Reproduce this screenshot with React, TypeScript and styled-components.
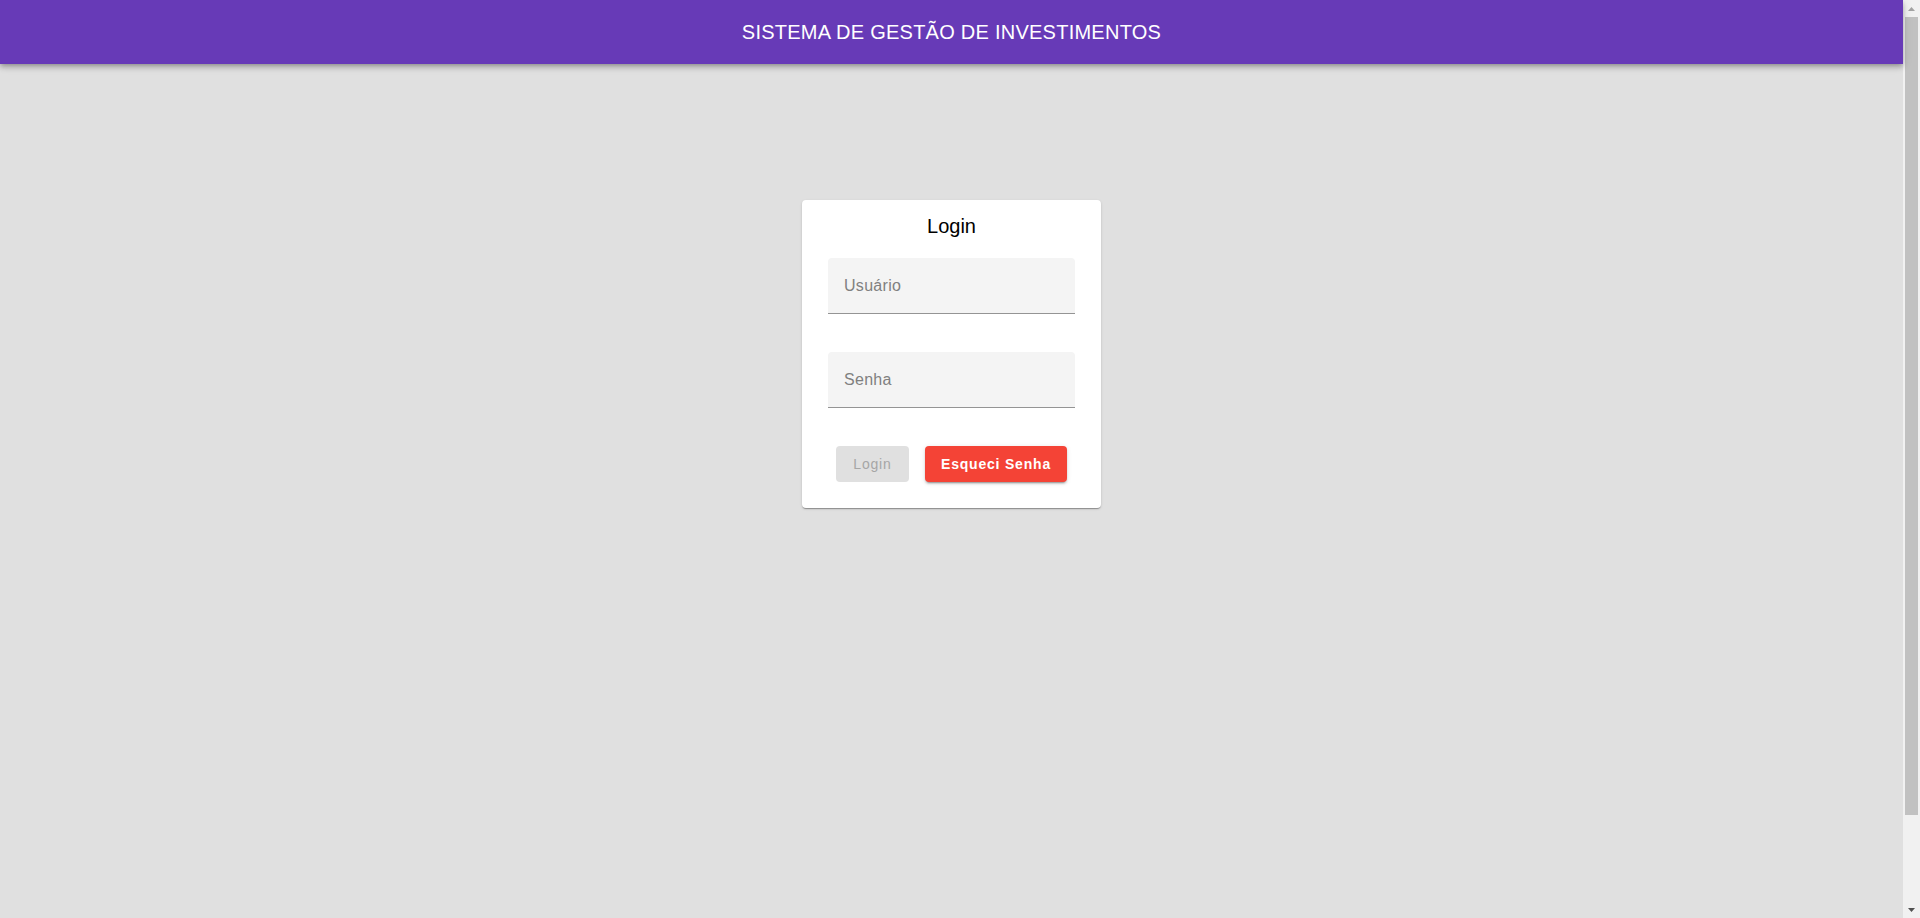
import React from "react";
import styled, { createGlobalStyle } from "styled-components";

const GlobalStyle = createGlobalStyle`
  html, body {
    margin: 0;
    padding: 0;
    background: #e0e0e0;
    font-family: "Liberation Sans", Arial, Helvetica, sans-serif;
    overflow: hidden;
  }
`;

const Shell = styled.div`
  display: flex;
  height: 100vh;
`;

const Page = styled.div`
  flex: 1;
  display: flex;
  flex-direction: column;
  min-width: 0;
`;

const Scrollbar = styled.div`
  width: 17px;
  flex: none;
  background: #f1f1f1;
  display: flex;
  flex-direction: column;
  align-items: center;
`;

const ArrowButton = styled.div`
  height: 17px;
  width: 17px;
  display: flex;
  align-items: center;
  justify-content: center;
`;

const Thumb = styled.div`
  width: 13px;
  height: 798px;
  background: #c1c1c1;
`;

const TrackSpacer = styled.div`
  flex: 1;
`;

const Header = styled.header`
  height: 64px;
  background: #673ab7;
  color: #fff;
  display: flex;
  align-items: center;
  justify-content: center;
  box-shadow: 0 2px 4px -1px rgba(0, 0, 0, 0.2), 0 4px 5px 0 rgba(0, 0, 0, 0.14),
    0 1px 10px 0 rgba(0, 0, 0, 0.12);
  position: relative;
  z-index: 1;
`;

const HeaderTitle = styled.h1`
  margin: 0;
  font-size: 20px;
  font-weight: 400;
  line-height: 24px;
  letter-spacing: 0.25px;
`;

const Main = styled.main`
  display: flex;
  justify-content: center;
  padding-top: 136px;
`;

const Card = styled.form`
  width: 299px;
  box-sizing: border-box;
  background: #fff;
  border-radius: 4px;
  padding: 14px 26px 26px;
  display: flex;
  flex-direction: column;
  box-shadow: 0 2px 1px -1px rgba(0, 0, 0, 0.2), 0 1px 1px 0 rgba(0, 0, 0, 0.14),
    0 1px 3px 0 rgba(0, 0, 0, 0.12);
`;

const CardTitle = styled.h2`
  margin: 0 0 20px;
  text-align: center;
  font-size: 20px;
  font-weight: 400;
  line-height: 24px;
  color: #000;
`;

const Field = styled.label`
  display: flex;
  align-items: center;
  height: 56px;
  box-sizing: border-box;
  padding: 0 16px;
  background: #f4f4f4;
  border-radius: 4px 4px 0 0;
  border-bottom: 1px solid #949494;
  margin-bottom: 38px;
`;

const FieldLabel = styled.span`
  font-size: 16px;
  letter-spacing: 0.3px;
  color: #808080;
  line-height: 1;
  padding-top: 1px;
`;

const Actions = styled.div`
  display: flex;
  justify-content: center;
  gap: 16px;
`;

const Button = styled.button<{ $variant: "disabled" | "danger" }>`
  height: 36px;
  box-sizing: border-box;
  border: none;
  border-radius: 4px;
  font-family: "Liberation Sans", Arial, Helvetica, sans-serif;
  font-size: 14px;
  letter-spacing: 0.8px;
  padding: 0 16px;
  cursor: pointer;
  ${(p) =>
    p.$variant === "danger"
      ? `
    background: #f44336;
    color: #fff;
    font-weight: 700;
    box-shadow: 0 3px 1px -2px rgba(0,0,0,0.2), 0 2px 2px 0 rgba(0,0,0,0.14), 0 1px 5px 0 rgba(0,0,0,0.12);
  `
      : `
    background: #e0e0e0;
    color: #a6a6a6;
    font-weight: 400;
    width: 73px;
    padding: 0;
  `}
`;

export default function App() {
  return (
    <>
      <GlobalStyle />
      <Shell>
        <Page>
          <Header>
            <HeaderTitle>SISTEMA DE GESTÃO DE INVESTIMENTOS</HeaderTitle>
          </Header>
          <Main>
            <Card onSubmit={(e) => e.preventDefault()}>
              <CardTitle>Login</CardTitle>
              <Field>
                <FieldLabel>Usuário</FieldLabel>
              </Field>
              <Field>
                <FieldLabel>Senha</FieldLabel>
              </Field>
              <Actions>
                <Button type="button" $variant="disabled" disabled>
                  Login
                </Button>
                <Button type="button" $variant="danger">
                  Esqueci Senha
                </Button>
              </Actions>
            </Card>
          </Main>
        </Page>
        <Scrollbar aria-hidden="true">
          <ArrowButton>
            <svg width="7" height="4" viewBox="0 0 7 4">
              <polygon points="3.5,0 7,4 0,4" fill="#a3a3a3" />
            </svg>
          </ArrowButton>
          <Thumb />
          <TrackSpacer />
          <ArrowButton>
            <svg width="7" height="4" viewBox="0 0 7 4">
              <polygon points="0,0 7,0 3.5,4" fill="#505050" />
            </svg>
          </ArrowButton>
        </Scrollbar>
      </Shell>
    </>
  );
}
